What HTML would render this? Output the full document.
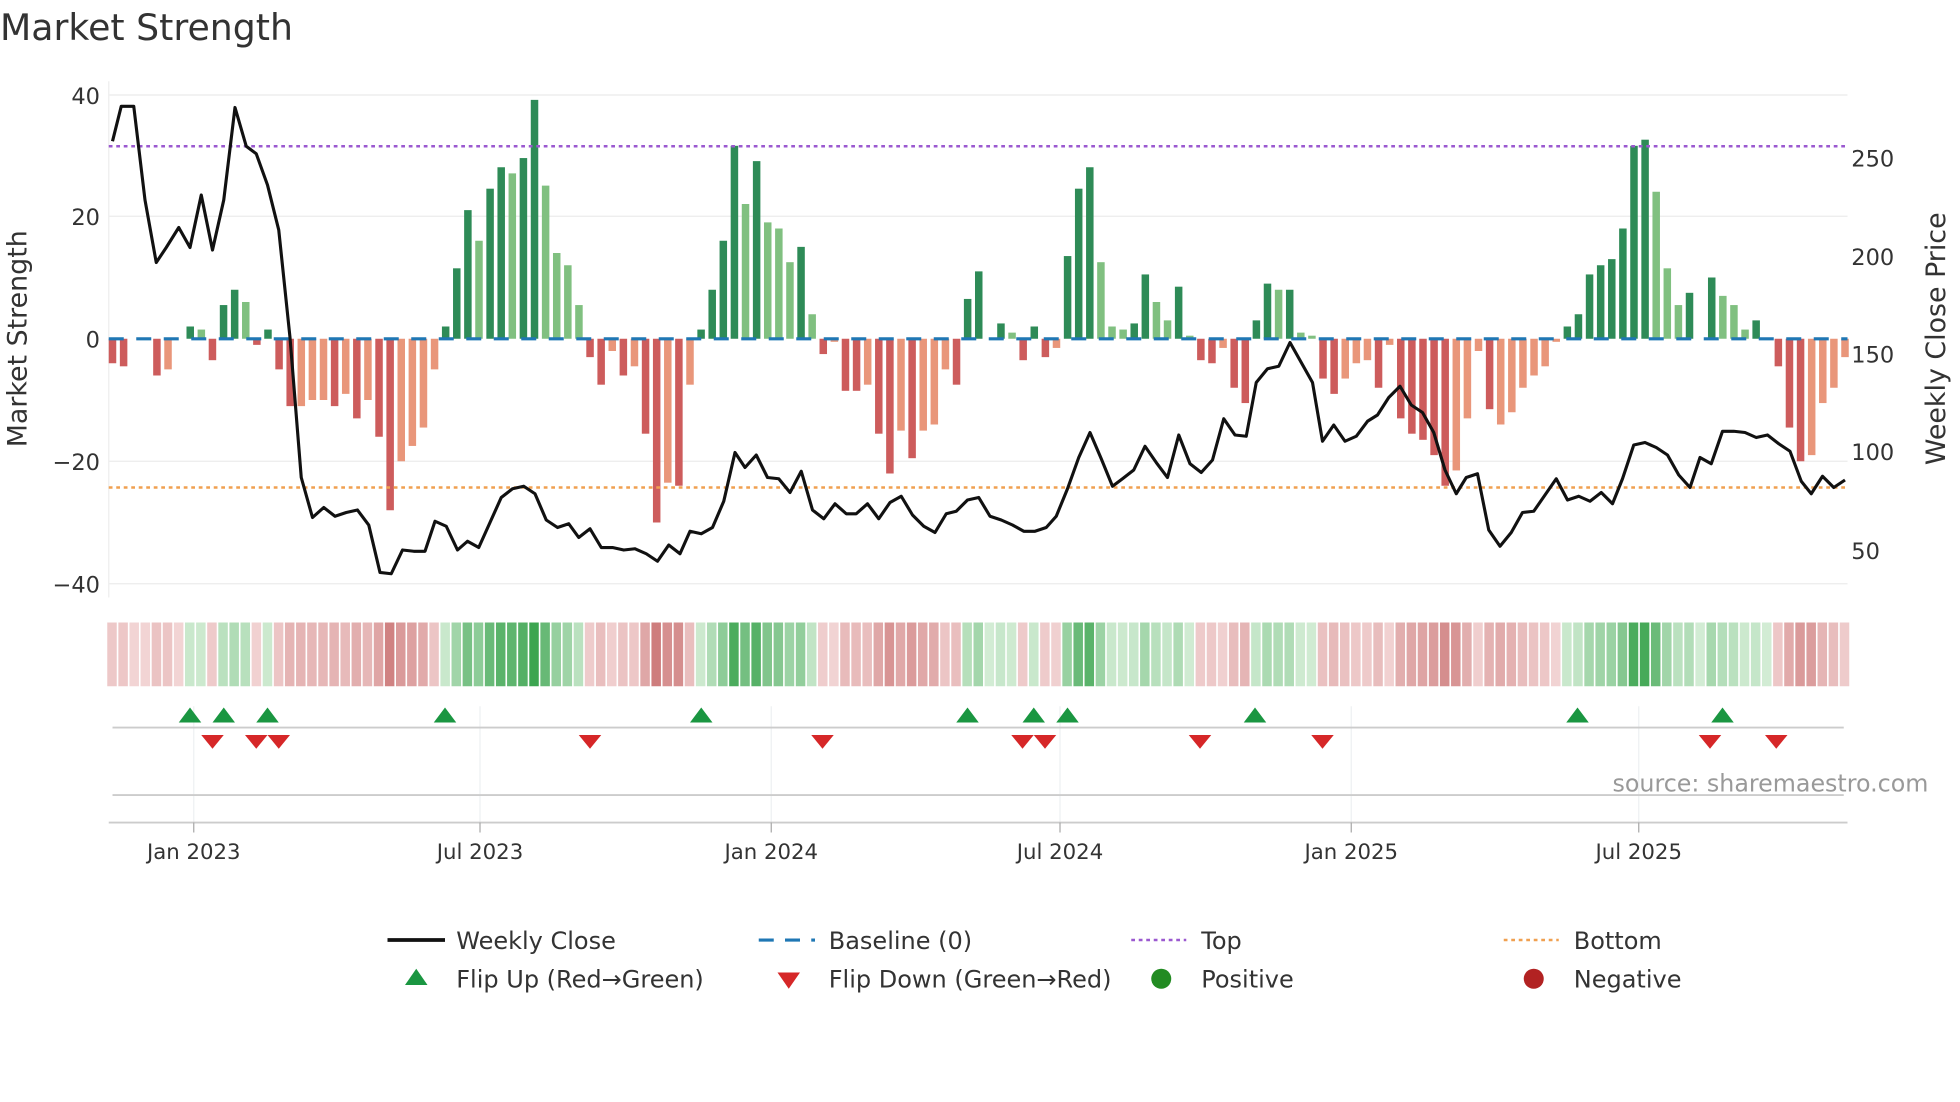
<!DOCTYPE html>
<html><head><meta charset="utf-8"><style>
html,body{margin:0;padding:0;background:#fff;width:1960px;height:1102px;overflow:hidden}
svg{display:block}
text{font-family:"DejaVu Sans","Liberation Sans",sans-serif;fill:#333}
</style></head><body>
<svg id="s" width="1960" height="1102" viewBox="0 0 1568 881.6" xmlns="http://www.w3.org/2000/svg">
<text x="0" y="32" font-size="29">Market Strength</text>
<g stroke="#ebebeb" stroke-width="1">
<line x1="87" y1="76" x2="1478" y2="76"/><line x1="87" y1="173" x2="1478" y2="173"/><line x1="87" y1="369" x2="1478" y2="369"/><line x1="87" y1="467" x2="1478" y2="467"/>
</g>
<line x1="87" y1="65" x2="87" y2="478" stroke="#eee"/>
<g font-size="18" text-anchor="end">
<text x="80" y="83">40</text><text x="80" y="180">20</text><text x="80" y="278">0</text><text x="80" y="376">−20</text><text x="80" y="474">−40</text>
</g>
<g font-size="18">
<text x="1481" y="133">250</text><text x="1481" y="212">200</text><text x="1481" y="290">150</text><text x="1481" y="368">100</text><text x="1481" y="447">50</text>
</g>
<text transform="translate(21,271) rotate(-90)" font-size="21.5" text-anchor="middle">Market Strength</text>
<text transform="translate(1556,271) rotate(-90)" font-size="21.5" text-anchor="middle">Weekly Close Price</text>
<g id="bars"></g>
<line x1="87" y1="271" x2="1478" y2="271" stroke="#1f77b4" stroke-width="2.5" stroke-dasharray="12,10"/>
<line x1="87" y1="117" x2="1478" y2="117" stroke="#9b59d0" stroke-width="2" stroke-dasharray="3,3"/>
<line x1="87" y1="390" x2="1478" y2="390" stroke="#f0a050" stroke-width="2" stroke-dasharray="3,3"/>
<polyline id="price" fill="none" stroke="#111" stroke-width="2.5" stroke-linejoin="round"/>
<g id="heat"></g>
<g stroke="#eef0f2" stroke-width="1">
<line x1="155" y1="565" x2="155" y2="658"/><line x1="384" y1="565" x2="384" y2="658"/><line x1="617" y1="565" x2="617" y2="658"/><line x1="848" y1="565" x2="848" y2="658"/><line x1="1081" y1="565" x2="1081" y2="658"/><line x1="1311" y1="565" x2="1311" y2="658"/>
</g>
<line x1="90" y1="582" x2="1475" y2="582" stroke="#ccc" stroke-width="1.5"/>
<line x1="90" y1="636" x2="1475" y2="636" stroke="#ccc" stroke-width="1.5"/>
<line x1="87" y1="658" x2="1478" y2="658" stroke="#ccc" stroke-width="1.5"/>
<g stroke="#aaa"><line x1="155" y1="658" x2="155" y2="666"/><line x1="384" y1="658" x2="384" y2="666"/><line x1="617" y1="658" x2="617" y2="666"/><line x1="848" y1="658" x2="848" y2="666"/><line x1="1081" y1="658" x2="1081" y2="666"/><line x1="1311" y1="658" x2="1311" y2="666"/></g>
<g id="tri"></g>
<text x="1290" y="633" font-size="19" style="fill:#999">source: sharemaestro.com</text>
<g font-size="17" text-anchor="middle">
<text x="155" y="687">Jan 2023</text><text x="384" y="687">Jul 2023</text><text x="617" y="687">Jan 2024</text><text x="848" y="687">Jul 2024</text><text x="1081" y="687">Jan 2025</text><text x="1311" y="687">Jul 2025</text>
</g>
<g font-size="19.2">
<line x1="310" y1="752" x2="356" y2="752" stroke="#111" stroke-width="3"/><text x="365" y="759">Weekly Close</text>
<line x1="607" y1="752" x2="652" y2="752" stroke="#1f77b4" stroke-width="2.5" stroke-dasharray="12,9"/><text x="663" y="759">Baseline (0)</text>
<line x1="905" y1="752" x2="949" y2="752" stroke="#9b59d0" stroke-width="2" stroke-dasharray="3,3"/><text x="961" y="759">Top</text>
<line x1="1203" y1="752" x2="1247" y2="752" stroke="#f0a050" stroke-width="2" stroke-dasharray="3,3"/><text x="1259" y="759">Bottom</text>
<polygon points="324,788 333,775 342,788" fill="#1a9641"/><text x="365" y="790">Flip Up (Red→Green)</text>
<polygon points="622,778 640,778 631,791" fill="#d62728"/><text x="663" y="790">Flip Down (Green→Red)</text>
<circle cx="929" cy="783" r="8" fill="#228b22"/><text x="961" y="790">Positive</text>
<circle cx="1227" cy="783" r="8" fill="#b22222"/><text x="1259" y="790">Negative</text>
</g>
</svg>
<script>
var V=[[-4,1],[-4.5,1],[0,0],[0,0],[-6,1],[-5,0],[0,0],[2,1],[1.5,0],[-3.5,1],[5.5,1],[8,1],[6,0],[-1,1],[1.5,1],[-5,1],[-11,1],[-11,0],[-10,0],[-10,0],[-11,1],[-9,0],[-13,1],[-10,0],[-16,1],[-28,1],[-20,0],[-17.5,0],[-14.5,0],[-5,0],[2,1],[11.5,1],[21,1],[16,0],[24.5,1],[28,1],[27,0],[29.5,1],[39,1],[25,0],[14,0],[12,0],[5.5,0],[-3,1],[-7.5,1],[-2,0],[-6,1],[-4.5,0],[-15.5,1],[-30,1],[-23.5,0],[-24,1],[-7.5,0],[1.5,1],[8,1],[16,1],[31.5,1],[22,0],[29,1],[19,0],[18,0],[12.5,0],[15,1],[4,0],[-2.5,1],[-0.5,0],[-8.5,1],[-8.5,1],[-7.5,0],[-15.5,1],[-22,1],[-15,0],[-19.5,1],[-15,0],[-14,0],[-5,0],[-7.5,1],[6.5,1],[11,1],[0,0],[2.5,1],[1,0],[-3.5,1],[2,1],[-3,1],[-1.5,0],[13.5,1],[24.5,1],[28,1],[12.5,0],[2,0],[1.5,0],[2.5,1],[10.5,1],[6,0],[3,0],[8.5,1],[0.5,0],[-3.5,1],[-4,1],[-1.5,0],[-8,1],[-10.5,1],[3,1],[9,1],[8,0],[8,1],[1,0],[0.5,0],[-6.5,1],[-9,1],[-6.5,0],[-4,0],[-3.5,0],[-8,1],[-1,0],[-13,1],[-15.5,1],[-16.5,1],[-19,1],[-24,1],[-21.5,0],[-13,0],[-2,0],[-11.5,1],[-14,0],[-12,0],[-8,0],[-6,0],[-4.5,0],[-0.5,0],[2,1],[4,1],[10.5,1],[12,1],[13,1],[18,1],[31.5,1],[32.5,1],[24,0],[11.5,0],[5.5,0],[7.5,1],[0,0],[10,1],[7,0],[5.5,0],[1.5,0],[3,1],[0,0],[-4.5,1],[-14.5,1],[-20,1],[-19,0],[-10.5,0],[-8,0],[-3,0]];
var ns="http://www.w3.org/2000/svg",b=document.getElementById('bars'),h=document.getElementById('heat');
var n=V.length,x0=90,dx=(1476-90)/(n-1);
function R(g,x,y,w,hh,c){var r=document.createElementNS(ns,'rect');r.setAttribute('x',x);r.setAttribute('y',y);r.setAttribute('width',w);r.setAttribute('height',hh);r.setAttribute('fill',c);g.appendChild(r);}
function mix(a,c,t){return 'rgb('+a.map(function(v,i){return Math.round(v+(c[i]-v)*t)}).join(',')+')';}
for(var i=0;i<n;i++){var v=V[i][0],d=V[i][1],x=x0+i*dx;
 if(v!==0){var c=v>0?(d?'#2e8b57':'#80c080'):(d?'#cd5c5c':'#e9967a');var y=271-v*4.9;R(b,x-3,Math.min(y,271),6,Math.abs(v*4.9),c);}
 var t=Math.min(Math.abs(v)/35,1),col;
 if(v>0||(v==0&&i>0&&V[i-1][0]>0))col=mix([210,236,212],[60,165,80],t);else col=mix([242,212,212],[200,110,110],t);
 R(h,x-4.2,498,7.6,51,col);}
var P=[[90,113],[97,85],[107,85],[116,160],[125,210],[133,198],[143,182],[152,198],[161,156],[170,200],[179,160],[188,86],[197,117],[205,123],[214,148],[223,184],[232,270],[241,382],[250,414],[259,406],[268,413],[277,410],[286,408],[295,420],[304,458],[313,459],[322,440],[331,441],[340,441],[348,417],[357,421],[366,440],[374,433],[383,438],[392,418],[401,398],[410,391],[419,389],[428,395],[437,416],[446,422],[455,419],[463,430],[472,423],[481,438],[490,438],[499,440],[508,439],[517,443],[526,449],[535,436],[544,443],[552,425],[561,427],[570,422],[579,401],[588,362],[596,374],[605,364],[614,382],[623,383],[632,394],[641,377],[650,408],[659,415],[668,403],[677,411],[685,411],[694,403],[703,415],[712,402],[721,397],[730,412],[739,421],[748,426],[757,411],[765,409],[774,400],[783,398],[792,413],[801,416],[810,420],[819,425],[828,425],[837,422],[845,413],[854,391],[863,366],[872,346],[881,367],[890,389],[898,383],[907,376],[916,357],[925,370],[934,382],[943,348],[952,371],[961,378],[970,368],[979,335],[988,348],[997,349],[1005,306],[1014,295],[1023,293],[1032,274],[1041,290],[1050,306],[1058,353],[1067,340],[1076,353],[1085,349],[1094,337],[1102,332],[1111,318],[1120,309],[1129,324],[1138,330],[1147,346],[1156,376],[1165,395],[1173,382],[1182,379],[1191,424],[1200,437],[1209,426],[1218,410],[1227,409],[1236,396],[1245,383],[1254,400],[1263,397],[1272,401],[1281,394],[1290,403],[1298,383],[1307,356],[1316,354],[1325,358],[1334,364],[1343,380],[1352,390],[1360,366],[1369,371],[1378,345],[1387,345],[1396,346],[1405,350],[1414,348],[1423,355],[1432,361],[1441,385],[1449,395],[1458,381],[1467,390],[1476,384]];
document.getElementById('price').setAttribute('points',P.map(function(p){return p.join(',')}).join(' '));
var tg=document.getElementById('tri');
function T(pts,c){var p=document.createElementNS(ns,'polygon');p.setAttribute('points',pts);p.setAttribute('fill',c);tg.appendChild(p);}
[152,179,214,356,561,774,827,854,1004,1262,1378].forEach(function(x){T((x-9)+',578 '+x+',566 '+(x+9)+',578','#1a9641');});
[170,205,223,472,658,818,836,960,1058,1368,1421].forEach(function(x){T((x-9)+',588 '+(x+9)+',588 '+x+',599','#d62728');});
</script>
</body></html>
